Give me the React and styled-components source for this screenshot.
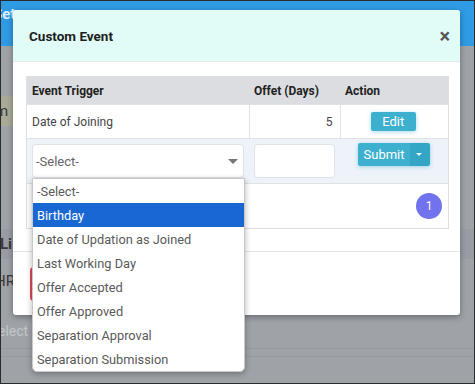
import React from 'react'
import styled, { createGlobalStyle } from 'styled-components'

const GlobalStyle = createGlobalStyle`
	* { box-sizing: border-box; }
	body {
		margin: 0;
		font-family: Roboto, 'Liberation Sans', sans-serif;
		background: #9fa3a8;
	}
`

const options = [
	'-Select-',
	'Birthday',
	'Date of Updation as Joined',
	'Last Working Day',
	'Offer Accepted',
	'Offer Approved',
	'Separation Approval',
	'Separation Submission',
]

const App = () => {
	return (
		<Frame>
			<GlobalStyle />
			<Page>
				<TopBar>Set</TopBar>
				<PageBody>
					<PageStrip $tone='#a9aa98' $top={50} $width={40}>m</PageStrip>
					<PageStrip $tone='#999da3' $top={103} $bold>Li</PageStrip>
					<PageStrip $tone='#9fa3a8' $top={7}>HR</PageStrip>
					<PageFaint>elect S</PageFaint>
					<PageLine />
				</PageBody>
			</Page>

			<Modal>
				<ModalHeader>
					<Title>Custom Event</Title>
					<Close>×</Close>
				</ModalHeader>
				<ModalBody>
					<Table>
						<thead>
							<tr>
								<Th $width={224}>Event Trigger</Th>
								<Th $width={91}>Offet (Days)</Th>
								<Th>Action</Th>
							</tr>
						</thead>
						<tbody>
							<Row $height={34}>
								<Td>Date of Joining</Td>
								<Td $divided $right>5</Td>
								<Td $divided $center>
									<EditButton>Edit</EditButton>
								</Td>
							</Row>
							<Row $height={45} $tint>
								<Td $pad='5px 5px 5px 5px'>
									<SelectWrap>
										<SelectBox>
											<span>-Select-</span>
											<Caret />
										</SelectBox>
										<OptionList>
											{options.map((opt, i) => (
												<Option key={opt} $active={i === 1}>{opt}</Option>
											))}
										</OptionList>
									</SelectWrap>
								</Td>
								<Td $pad='5px'>
									<NumberInput />
								</Td>
								<Td $pad='4px 18px 0' $top>
									<SplitButton>
										<SubmitPart>Submit</SubmitPart>
										<CaretPart><Caret $light /></CaretPart>
									</SplitButton>
								</Td>
							</Row>
							<Row $height={45}>
								<Td colSpan={3} $right $pad='0 6px'>
									<Badge>1</Badge>
								</Td>
							</Row>
						</tbody>
					</Table>
				</ModalBody>
				<ModalFooter>
					<DangerButton aria-label='Close' />
				</ModalFooter>
			</Modal>
		</Frame>
	)
}

export default App

const Frame = styled.div`
	position: relative;
	width: 475px;
	height: 384px;
	overflow: hidden;
	border: 1px solid #2b2b2b;
`
const Page = styled.div`
	height: 100%;
	display: flex;
	flex-direction: column;
`
const TopBar = styled.div`
	height: 45px;
	flex-shrink: 0;
	background: #2f9be4;
	color: #dcefff;
	font-size: 15px;
	font-weight: 700;
	padding: 4px 0 0 0;
	text-indent: -8px;
`
const PageBody = styled.div`
	flex: 1;
	display: flex;
	flex-direction: column;
	background: #9fa3a8;
`
const PageStrip = styled.div`
	margin-top: ${({ $top }) => $top}px;
	width: ${({ $width }) => ($width ? `${$width}px` : '100%')};
	height: 30px;
	flex-shrink: 0;
	display: flex;
	align-items: center;
	background: ${({ $tone }) => $tone};
	color: #3a3a3a;
	font-size: 15px;
	font-weight: ${({ $bold }) => ($bold ? 700 : 400)};
	text-indent: ${({ $bold }) => ($bold ? '-1px' : '-6px')};
`
const PageFaint = styled.div`
	margin-top: 27px;
	font-size: 14px;
	line-height: 16px;
	color: #c2c5c9;
	text-indent: -3px;
`
const PageLine = styled.div`
	margin-top: 9px;
	height: 9px;
	flex-shrink: 0;
	border-top: 1px solid #959a9f;
	border-bottom: 1px solid #959a9f;
`

const Modal = styled.div`
	position: absolute;
	top: 9px;
	left: 12px;
	width: 447px;
	height: 305px;
	background: #fff;
	border-radius: 3px;
	box-shadow: 0 2px 6px rgba(0, 0, 0, 0.35);
	display: flex;
	flex-direction: column;
`
const ModalHeader = styled.div`
	height: 52px;
	flex-shrink: 0;
	background: #e1fbf7;
	border-bottom: 1px solid #e4e8ea;
	border-radius: 3px 3px 0 0;
	display: flex;
	align-items: center;
	justify-content: space-between;
	padding: 0 10px 0 16px;
`
const Title = styled.h5`
	margin: 0;
	font-size: 13.5px;
	font-weight: 700;
	color: #1d1d1d;
`
const Close = styled.span`
	font-size: 20px;
	font-weight: 700;
	color: #555;
	line-height: 1;
`
const ModalBody = styled.div`
	padding: 14px 10px 22px 13px;
	border-bottom: 1px solid #e3e6e8;
`
const Table = styled.table`
	width: 423px;
	border-collapse: collapse;
	border: 1px solid #dde0e3;
	color: #444;
`
const Th = styled.th`
	width: ${({ $width }) => ($width ? `${$width}px` : 'auto')};
	height: 28px;
	background: #dcdde0;
	text-align: left;
	padding: 0 5px;
	font-size: 12px;
	font-weight: 700;
	color: #222;
`
const Row = styled.tr`
	height: ${({ $height }) => $height}px;
	background: ${({ $tint }) => ($tint ? '#eef2f9' : '#fff')};
	border-top: 1px solid #e0e3e6;
`
const Td = styled.td`
	padding: ${({ $pad }) => $pad || '0 7px 0 5px'};
	text-align: ${({ $right, $center }) => ($right ? 'right' : $center ? 'center' : 'left')};
	vertical-align: ${({ $top }) => ($top ? 'top' : 'middle')};
	border-left: ${({ $divided }) => ($divided ? '1px solid #e0e3e6' : 'none')};
	font-size: 12px;
	color: #444;
`
const EditButton = styled.button`
	width: 45px;
	height: 19px;
	border: none;
	border-radius: 2px;
	background: #3db0cf;
	color: #fff;
	font-family: inherit;
	font-size: 13px;
	padding: 0;
	box-shadow: 0 1px 4px rgba(61, 176, 207, 0.45);
`
const SelectWrap = styled.div`
	position: relative;
`
const SelectBox = styled.div`
	height: 34px;
	background: #fff;
	border: 1px solid #dfe2e6;
	border-radius: 4px;
	display: flex;
	align-items: center;
	justify-content: space-between;
	padding: 0 3px 0 3px;
	color: #666;
	font-size: 13px;
`
const Caret = styled.span`
	width: 0;
	height: 0;
	margin-right: 2px;
	border-left: ${({ $light }) => ($light ? 3 : 5)}px solid transparent;
	border-right: ${({ $light }) => ($light ? 3 : 5)}px solid transparent;
	border-top: ${({ $light }) => ($light ? 3 : 5)}px solid ${({ $light }) => ($light ? '#e8f7fb' : '#777')};
`
const OptionList = styled.ul`
	position: absolute;
	top: 34px;
	left: 0;
	width: 213px;
	margin: 0;
	padding: 0;
	list-style: none;
	background: #fff;
	border: 1px solid #c9c9c9;
	border-radius: 0 0 5px 5px;
	box-shadow: 0 2px 6px rgba(0, 0, 0, 0.3);
	z-index: 5;
`
const Option = styled.li`
	height: 24px;
	display: flex;
	align-items: center;
	padding-left: 4px;
	font-size: 12.8px;
	color: ${({ $active }) => ($active ? '#fff' : '#5a5a5a')};
	background: ${({ $active }) => ($active ? '#1967d2' : 'transparent')};
`
const NumberInput = styled.input`
	width: 81px;
	height: 34px;
	border: 1px solid #dfe2e6;
	border-radius: 4px;
	background: #fff;
	outline: none;
`
const SplitButton = styled.div`
	display: inline-flex;
	height: 23px;
	border-radius: 2px;
	overflow: hidden;
	box-shadow: 0 1px 4px rgba(61, 176, 207, 0.45);
`
const SubmitPart = styled.span`
	width: 52px;
	display: flex;
	align-items: center;
	justify-content: center;
	background: #3db0cf;
	color: #fff;
	font-size: 13px;
`
const CaretPart = styled.span`
	width: 20px;
	display: flex;
	align-items: center;
	justify-content: center;
	background: #33a6c5;
`
const Badge = styled.span`
	display: inline-flex;
	align-items: center;
	justify-content: center;
	width: 26px;
	height: 26px;
	border-radius: 50%;
	background: #7072ee;
	color: #fff;
	font-size: 12px;
`
const ModalFooter = styled.div`
	flex: 1;
	display: flex;
	align-items: center;
	padding: 0 0 0 17px;
`
const DangerButton = styled.button`
	width: 60px;
	height: 34px;
	border: none;
	border-radius: 4px;
	background: #e0485f;
`
